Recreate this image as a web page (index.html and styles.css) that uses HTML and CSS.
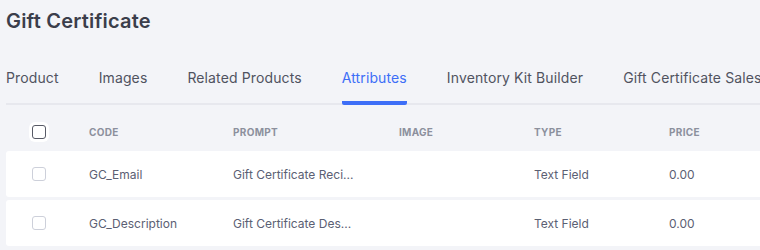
FILE: index.html
```html
<!DOCTYPE html>
<html lang="en">
<head>
    <meta charset="UTF-8">
    <meta name="viewport" content="width=device-width, initial-scale=1.0">
    <title>Gift Certificate</title>
    <link rel="stylesheet" href="styles.css">
</head>
<body>
    <div class="page">
        <h1 class="title">Gift Certificate</h1>

        <!--tabs-->
        <nav class="tabs">
            <a class="tab">Product</a>
            <a class="tab">Images</a>
            <a class="tab">Related Products</a>
            <a class="tab active">Attributes</a>
            <a class="tab">Inventory Kit Builder</a>
            <a class="tab">Gift Certificate Sales</a>
        </nav>

        <!--attributes table-->
        <div class="table">
            <div class="row head">
                <div class="cell check"><span class="box box-head"></span></div>
                <div class="cell">Code</div>
                <div class="cell">Prompt</div>
                <div class="cell">Image</div>
                <div class="cell">Type</div>
                <div class="cell">Price</div>
            </div>
            <div class="row item">
                <div class="cell check"><span class="box"></span></div>
                <div class="cell">GC_Email</div>
                <div class="cell">Gift Certificate Reci...</div>
                <div class="cell"></div>
                <div class="cell">Text Field</div>
                <div class="cell">0.00</div>
            </div>
            <div class="row item">
                <div class="cell check"><span class="box"></span></div>
                <div class="cell">GC_Description</div>
                <div class="cell">Gift Certificate Des...</div>
                <div class="cell"></div>
                <div class="cell">Text Field</div>
                <div class="cell">0.00</div>
            </div>
        </div>
    </div>
</body>
</html>
```

FILE: styles.css
```css
* {
    margin: 0;
    padding: 0;
    box-sizing: border-box;
}

body {
    font-family: Inter, "Noto Sans", sans-serif;
    background-color: #f3f4f8;
    overflow: hidden;
}

.page {
    padding: 9px 0 0 6px;
    width: 800px;
}

.title {
    font-size: 20px;
    font-weight: 600;
    color: #3b3e4b;
    line-height: 24px;
    letter-spacing: 0.2px;
}

.tabs {
    display: flex;
    gap: 40px;
    margin-top: 31px;
    border-bottom: 2px solid #e7e8ee;
    white-space: nowrap;
}

.tab {
    font-size: 14px;
    letter-spacing: 0.12px;
    color: #50535f;
    padding: 5px 0 14px;
    line-height: 18px;
    border-bottom: 4px solid transparent;
    margin-bottom: -2px;
    border-radius: 2px;
}

.tab.active {
    color: #3d6ef7;
    border-bottom-color: #3d6ef7;
}

.table {
    display: flex;
    flex-direction: column;
    gap: 3px;
}

.row {
    display: grid;
    grid-template-columns: 83px 144px 166px 135px 135px 1fr;
    align-items: center;
}

.head {
    height: 46px;
    margin-bottom: -3px;
    font-size: 10px;
    font-weight: 700;
    text-transform: uppercase;
    letter-spacing: 0.3px;
    color: #8c909d;
    padding-top: 8px;
}

.item {
    height: 46px;
    background-color: #fff;
    border-radius: 3px;
    font-size: 12px;
    color: #5b6073;
}

.check {
    padding-left: 26px;
    display: flex;
    align-items: center;
}

.box {
    display: block;
    width: 14px;
    height: 14px;
    border: 1px solid #cdd0da;
    border-radius: 3px;
}

.box-head {
    border: 1.5px solid #575a66;
    box-shadow: 0 0 0 3px #fff;
    background-color: #fff;
    border-radius: 3px;
}
```
